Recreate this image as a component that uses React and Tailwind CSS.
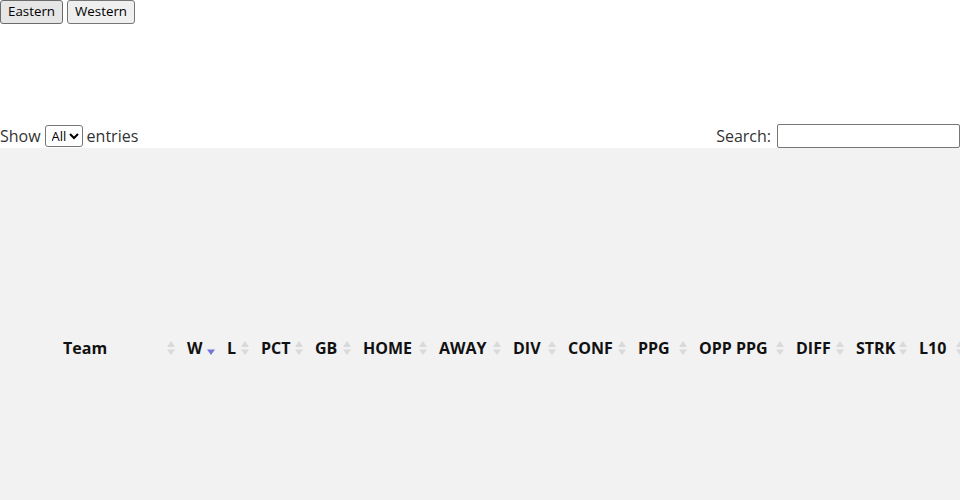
import React from "react";

const columns = [
  { label: "", width: 53, icon: false },
  { label: "Team", width: 124 },
  { label: "W", width: 40, active: true },
  { label: "L", width: 34 },
  { label: "PCT", width: 54 },
  { label: "GB", width: 48 },
  { label: "HOME", width: 76 },
  { label: "AWAY", width: 74 },
  { label: "DIV", width: 55 },
  { label: "CONF", width: 70 },
  { label: "PPG", width: 61 },
  { label: "OPP PPG", width: 97 },
  { label: "DIFF", width: 60 },
  { label: "STRK", width: 63 },
  { label: "L10", width: 57 },
];

function SortIcon({ active }) {
  return (
    <svg width="8" height="14" viewBox="0 0 8 14" className="shrink-0">
      {!active && <polygon points="0,6 4,0 8,6" fill="#dadada" />}
      <polygon points="0,8.5 8,8.5 4,14" fill={active ? "#7575dc" : "#dadada"} />
    </svg>
  );
}

export default function App() {
  const font = { fontFamily: '"Open Sans", "Noto Sans", sans-serif' };
  return (
    <div className="h-[500px] w-full overflow-hidden bg-white text-[#222]" style={font}>
      <div className="flex gap-[4px]">
        <button className="h-[24px] px-[7px] border border-[#6b6b6b] rounded-[3px] bg-[#e6e6e6] text-[13.33px] text-black">Eastern</button>
        <button className="h-[24px] px-[7px] border border-[#767676] rounded-[3px] bg-[#efefef] text-[13.33px] text-black">Western</button>
      </div>

      <div className="h-[100px]"></div>

      <div className="flex items-center justify-between h-[24px] text-[16px] text-[#333]">
        <div className="flex items-center">
          <span>Show</span>
          <select className="mx-[4px] w-[38px] h-[22px] border border-[#767676] rounded-[3px] text-[13px] text-black pl-[2px] pr-0 bg-white">
            <option>All</option>
          </select>
          <span>entries</span>
        </div>
        <div className="flex items-center">
          <span>Search:</span>
          <input className="ml-[6px] w-[183px] h-[24px] border border-[#767676] rounded-[2px] bg-white" />
        </div>
      </div>

      <div className="w-[966px] flex items-center h-[400px] bg-[#f2f2f2]">
        {columns.map((c, i) => (
          <div
            key={i}
            className="flex items-center shrink-0 pl-[10px] pr-[2px] text-[16px] font-bold text-[#111]"
            style={{ width: c.width }}
          >
            <span className="whitespace-nowrap">{c.label}</span>
            <span className="flex-1"></span>
            {c.icon !== false && <SortIcon active={c.active} />}
          </div>
        ))}
      </div>
    </div>
  );
}
